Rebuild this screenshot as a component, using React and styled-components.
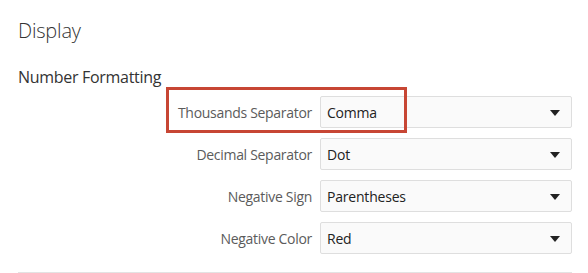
import React from 'react'
import styled, { createGlobalStyle } from 'styled-components'

const Global = createGlobalStyle`
    body {
        margin: 0;
        background: #fff;
        font-family: "Open Sans", "Noto Sans", sans-serif;
        color: #333;
    }
`
const Page = styled.div`
    width: 588px;
    height: 273px;
    padding: 17px 16px 0 18px;
    box-sizing: border-box;
    overflow: hidden;
`
const Title = styled.h1`
    margin: 0;
    font-size: 20px;
    font-weight: 300;
    line-height: 28px;
    letter-spacing: -0.2px;
    color: #333;
`
const Subtitle = styled.h2`
    margin: 20px 0 0;
    font-size: 16px;
    font-weight: 400;
    line-height: 24px;
    letter-spacing: -0.3px;
    color: #333;
`
const Form = styled.div`
    position: relative;
    display: grid;
    grid-template-columns: 294px 252px;
    column-gap: 8px;
    row-gap: 10px;
    margin-top: 7px;
    padding-bottom: 18px;
    border-bottom: 1px solid #e3e3e3;
`
const Label = styled.label`
    align-self: center;
    text-align: right;
    font-size: 14px;
    letter-spacing: -0.3px;
    color: #5b5b5b;
`
const Select = styled.div`
    height: 32px;
    box-sizing: border-box;
    border: 1px solid #dedede;
    border-radius: 2px;
    background: #fafafa;
    display: flex;
    align-items: center;
    justify-content: space-between;
    padding: 0 11px 0 6px;
    font-size: 14px;
    letter-spacing: -0.2px;
    color: #222;
`
const Arrow = styled.span`
    width: 0;
    height: 0;
    border-left: 5px solid transparent;
    border-right: 5px solid transparent;
    border-top: 6px solid #222;
    margin-top: 1px;
`
const Highlight = styled.div`
    position: absolute;
    left: 148px;
    top: -9px;
    width: 241px;
    height: 46px;
    box-sizing: border-box;
    border: 3px solid #c74634;
    pointer-events: none;
`

const fields = [
    ['Thousands Separator', 'Comma'],
    ['Decimal Separator', 'Dot'],
    ['Negative Sign', 'Parentheses'],
    ['Negative Color', 'Red'],
]

export default function App() {
    return (
        <Page>
            <Global />
            <Title>Display</Title>
            <Subtitle>Number Formatting</Subtitle>
            <Form>
                {fields.map(([label, value]) => (
                    <React.Fragment key={label}>
                        <Label>{label}</Label>
                        <Select>
                            {value}
                            <Arrow />
                        </Select>
                    </React.Fragment>
                ))}
                <Highlight />
            </Form>
        </Page>
    )
}
